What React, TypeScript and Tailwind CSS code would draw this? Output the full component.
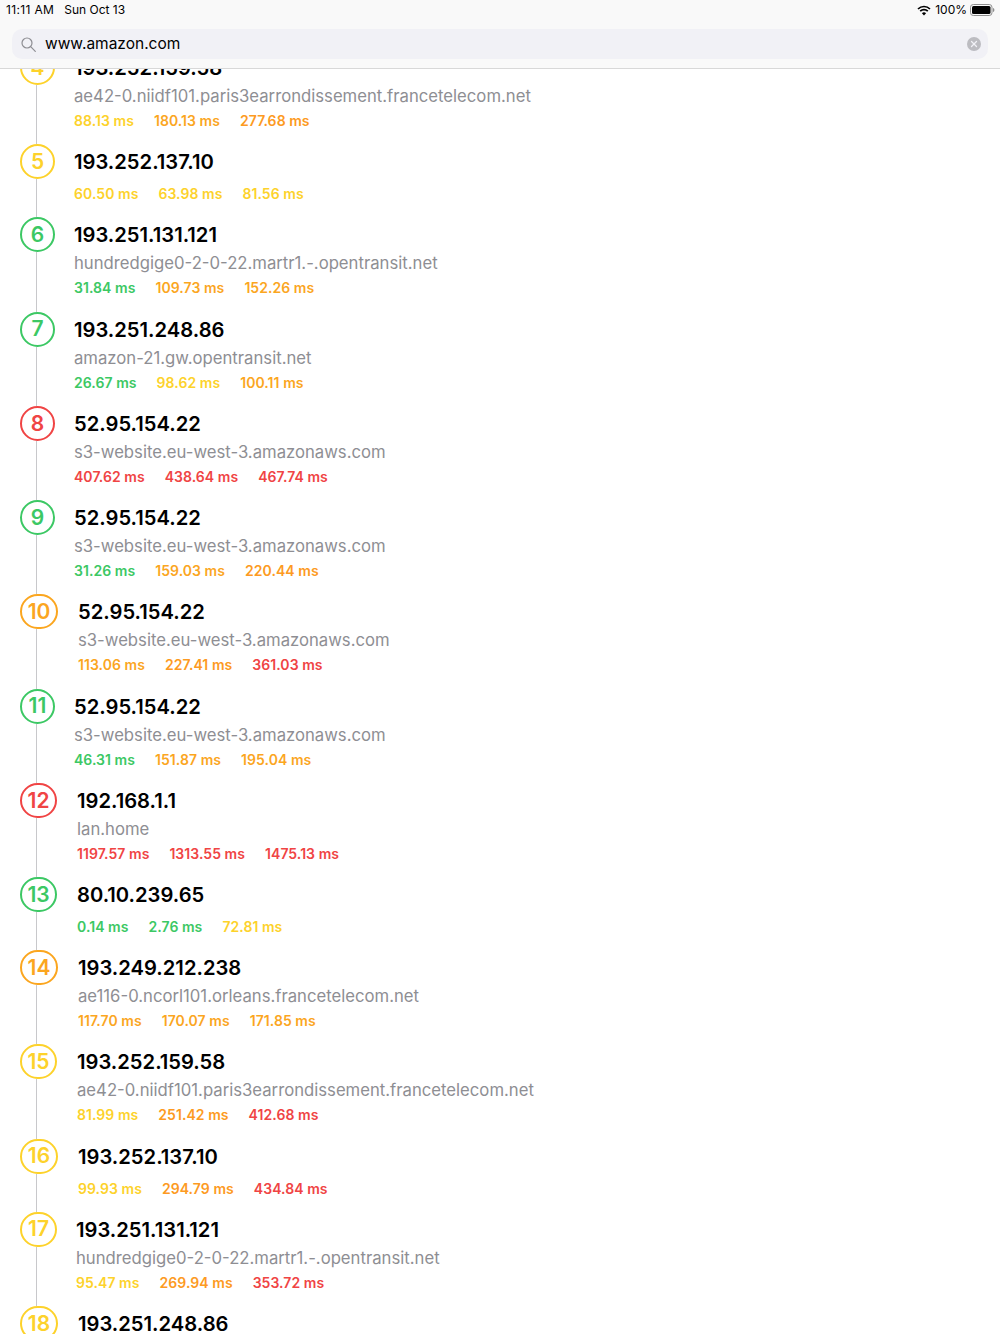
import { X } from 'lucide-react';

type Hop = {
  n: number;
  ip: string;
  host?: string;
  times: number[];
  ring: string;
  widthClass: string;
  gapClass: string;
};

const hops: Hop[] = [
  { n: 4, ip: '193.252.159.58', host: 'ae42-0.niidf101.paris3earrondissement.francetelecom.net', times: [88.13, 180.13, 277.68], ring: 'border-[#fdd22b] text-[#fdd22b]', widthClass: 'w-[35px]', gapClass: 'ml-[19px]' },
  { n: 5, ip: '193.252.137.10', times: [60.5, 63.98, 81.56], ring: 'border-[#fdd22b] text-[#fdd22b]', widthClass: 'w-[35px]', gapClass: 'ml-[19px]' },
  { n: 6, ip: '193.251.131.121', host: 'hundredgige0-2-0-22.martr1.-.opentransit.net', times: [31.84, 109.73, 152.26], ring: 'border-[#3cc864] text-[#3cc864]', widthClass: 'w-[35px]', gapClass: 'ml-[19px]' },
  { n: 7, ip: '193.251.248.86', host: 'amazon-21.gw.opentransit.net', times: [26.67, 98.62, 100.11], ring: 'border-[#3cc864] text-[#3cc864]', widthClass: 'w-[35px]', gapClass: 'ml-[19px]' },
  { n: 8, ip: '52.95.154.22', host: 's3-website.eu-west-3.amazonaws.com', times: [407.62, 438.64, 467.74], ring: 'border-[#f04444] text-[#f04444]', widthClass: 'w-[35px]', gapClass: 'ml-[19px]' },
  { n: 9, ip: '52.95.154.22', host: 's3-website.eu-west-3.amazonaws.com', times: [31.26, 159.03, 220.44], ring: 'border-[#3cc864] text-[#3cc864]', widthClass: 'w-[35px]', gapClass: 'ml-[19px]' },
  { n: 10, ip: '52.95.154.22', host: 's3-website.eu-west-3.amazonaws.com', times: [113.06, 227.41, 361.03], ring: 'border-[#fba61f] text-[#fba61f]', widthClass: 'w-[38px]', gapClass: 'ml-[20px]' },
  { n: 11, ip: '52.95.154.22', host: 's3-website.eu-west-3.amazonaws.com', times: [46.31, 151.87, 195.04], ring: 'border-[#3cc864] text-[#3cc864]', widthClass: 'w-[35px]', gapClass: 'ml-[19px]' },
  { n: 12, ip: '192.168.1.1', host: 'lan.home', times: [1197.57, 1313.55, 1475.13], ring: 'border-[#f04444] text-[#f04444]', widthClass: 'w-[37px]', gapClass: 'ml-[20px]' },
  { n: 13, ip: '80.10.239.65', times: [0.14, 2.76, 72.81], ring: 'border-[#3cc864] text-[#3cc864]', widthClass: 'w-[37px]', gapClass: 'ml-[20px]' },
  { n: 14, ip: '193.249.212.238', host: 'ae116-0.ncorl101.orleans.francetelecom.net', times: [117.7, 170.07, 171.85], ring: 'border-[#fba61f] text-[#fba61f]', widthClass: 'w-[38px]', gapClass: 'ml-[20px]' },
  { n: 15, ip: '193.252.159.58', host: 'ae42-0.niidf101.paris3earrondissement.francetelecom.net', times: [81.99, 251.42, 412.68], ring: 'border-[#fdd22b] text-[#fdd22b]', widthClass: 'w-[37px]', gapClass: 'ml-[20px]' },
  { n: 16, ip: '193.252.137.10', times: [99.93, 294.79, 434.84], ring: 'border-[#fdd22b] text-[#fdd22b]', widthClass: 'w-[38px]', gapClass: 'ml-[20px]' },
  { n: 17, ip: '193.251.131.121', host: 'hundredgige0-2-0-22.martr1.-.opentransit.net', times: [95.47, 269.94, 353.72], ring: 'border-[#fdd22b] text-[#fdd22b]', widthClass: 'w-[37px]', gapClass: 'ml-[19px]' },
  { n: 18, ip: '193.251.248.86', times: [], ring: 'border-[#fdd22b] text-[#fdd22b]', widthClass: 'w-[38px]', gapClass: 'ml-[20px]' },
];

function timeColor(t: number) {
  if (t < 50) return 'text-[#3cc864]';
  if (t < 100) return 'text-[#fdd22b]';
  if (t < 200) return 'text-[#fba61f]';
  if (t < 300) return 'text-[#fd9a22]';
  return 'text-[#f04444]';
}

function StatusBar() {
  return (
    <div className="flex h-[20px] items-center justify-between pl-[6px] pr-[5px] text-[12px] text-black">
      <div className="flex gap-[10px]">
        <span className="tracking-[0.35px]">11:11 AM</span>
        <span>Sun Oct 13</span>
      </div>
      <div className="flex items-center">
        <svg width="14" height="11" viewBox="0 0 14 11" className="mr-[4px]">
          <path d="M1 4 A8.5 8.5 0 0 1 13 4" fill="none" stroke="black" strokeWidth="1.7" />
          <path d="M3.2 6.2 A5.4 5.4 0 0 1 10.8 6.2" fill="none" stroke="black" strokeWidth="1.7" />
          <path d="M7 10.6 L4.9 8.3 A3 3 0 0 1 9.1 8.3 Z" fill="black" />
        </svg>
        <span>100%</span>
        <svg width="25" height="12" viewBox="0 0 25 12" className="ml-[3px]">
          <rect x="0.5" y="0.5" width="21.5" height="11" rx="2.8" fill="none" stroke="#8e8e8e" />
          <rect x="2" y="2" width="18.5" height="8" rx="1.5" fill="black" />
          <path d="M23 4 C24 4.3 24.4 5 24.4 6 C24.4 7 24 7.7 23 8 Z" fill="#8e8e8e" />
        </svg>
      </div>
    </div>
  );
}

function SearchField() {
  return (
    <div className="mx-[12px] mt-[9px] flex h-[30px] items-center rounded-[10px] bg-[#f1f1f6] pl-[9px] pr-[7px]">
      <svg width="15" height="15" viewBox="0 0 15 15" fill="none" stroke="#8e8e93" strokeWidth="1.2">
        <circle cx="6" cy="6" r="5" />
        <path d="M9.7 9.7 L14.3 14.3" strokeLinecap="round" />
      </svg>
      <span className="ml-[9px] flex-1 pb-[1px] text-[15.5px] text-black">www.amazon.com</span>
      <span className="flex h-[14px] w-[14px] items-center justify-center rounded-full bg-[#bcbcc1] text-[#f1f1f6]">
        <X size={10} strokeWidth={3} />
      </span>
    </div>
  );
}

function HopRow({ hop }: { hop: Hop }) {
  return (
    <div className={`flex pl-[20px] ${hop.host ? 'h-[94.25px]' : 'h-[73px]'}`}>
      <div className="flex flex-col">
        <div className={`flex h-[35px] shrink-0 items-center justify-center rounded-full border-2 bg-white text-[21px] font-semibold ${hop.widthClass} ${hop.ring}`}>
          {hop.n}
        </div>
        <div className="ml-[16px] w-px flex-1 bg-[#c8c8cb]" />
      </div>
      <div className={hop.gapClass}>
        <div className="text-[20.2px] font-semibold leading-[35px] text-black">{hop.ip}</div>
        {hop.host && <div className="text-[16.7px] leading-[23px] text-[#8e8e93]">{hop.host}</div>}
        <div className={`flex gap-[20px] text-[14px] font-semibold leading-[20px] tracking-[0.05px] ${hop.host ? 'mt-[3px]' : 'mt-[5px]'}`}>
          {hop.times.map((t) => (
            <span key={t} className={timeColor(t)}>{t.toFixed(2)} ms</span>
          ))}
        </div>
      </div>
    </div>
  );
}

export default function App() {
  return (
    <div className="h-[1334px] w-[1000px] overflow-hidden bg-white font-['Inter',sans-serif]">
      <div className="relative z-10 h-[69px] border-b border-[#d8d8d8] bg-[#f9f9f9]">
        <StatusBar />
        <SearchField />
      </div>
      <div className="-mt-[19px]">
        {hops.map((hop) => (
          <HopRow key={hop.n} hop={hop} />
        ))}
      </div>
    </div>
  );
}
